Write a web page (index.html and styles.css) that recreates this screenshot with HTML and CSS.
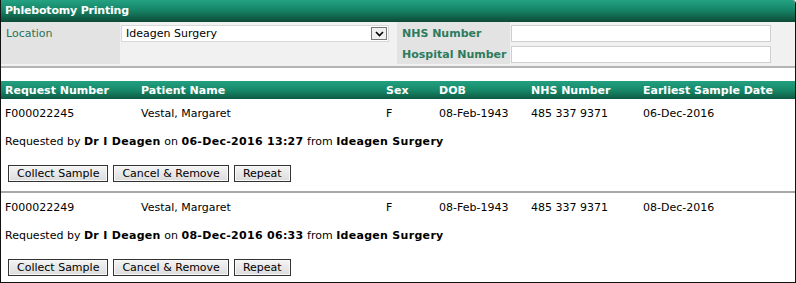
FILE: index.html
```html
<!DOCTYPE html>
<html lang="en">
<head>
  <meta charset="UTF-8">
  <title>Phlebotomy Printing</title>
  <link rel="stylesheet" href="styles.css">
</head>
<body>
  <div class="panel">
    <div class="titleBar">Phlebotomy Printing</div>

    <div class="filters">
      <div class="label locLabel">Location</div>
      <div class="field locField">
        <div class="select">
          <span>Ideagen Surgery</span>
          <span class="arrow">
            <svg width="9" height="6" viewBox="0 0 9 6"><path d="M1 1 L4.5 4.5 L8 1" fill="none" stroke="#000" stroke-width="1.6"/></svg>
          </span>
        </div>
      </div>
      <div class="label">NHS Number</div>
      <div class="field"><div class="input"></div></div>
      <div class="label">Hospital Number</div>
      <div class="field"><div class="input"></div></div>
    </div>

    <table class="results">
      <thead>
        <tr>
          <th class="cReq">Request Number</th>
          <th class="cName">Patient Name</th>
          <th class="cSex">Sex</th>
          <th class="cDob">DOB</th>
          <th class="cNhs">NHS Number</th>
          <th>Earliest Sample Date</th>
        </tr>
      </thead>
      <tbody>
        <tr class="dataRow">
          <td>F000022245</td>
          <td>Vestal, Margaret</td>
          <td>F</td>
          <td>08-Feb-1943</td>
          <td>485 337 9371</td>
          <td>06-Dec-2016</td>
        </tr>
        <tr class="infoRow">
          <td colspan="6">Requested by <b>Dr I Deagen</b> on <b>06-Dec-2016 13:27</b> from <b>Ideagen Surgery</b></td>
        </tr>
        <tr class="btnRow">
          <td colspan="6">
            <div class="buttons">
              <button>Collect Sample</button>
              <button>Cancel &amp; Remove</button>
              <button>Repeat</button>
            </div>
          </td>
        </tr>
        <tr class="dataRow">
          <td>F000022249</td>
          <td>Vestal, Margaret</td>
          <td>F</td>
          <td>08-Feb-1943</td>
          <td>485 337 9371</td>
          <td>08-Dec-2016</td>
        </tr>
        <tr class="infoRow">
          <td colspan="6">Requested by <b>Dr I Deagen</b> on <b>08-Dec-2016 06:33</b> from <b>Ideagen Surgery</b></td>
        </tr>
        <tr class="btnRow last">
          <td colspan="6">
            <div class="buttons">
              <button>Collect Sample</button>
              <button>Cancel &amp; Remove</button>
              <button>Repeat</button>
            </div>
          </td>
        </tr>
      </tbody>
    </table>
  </div>
</body>
</html>
```

FILE: styles.css
```css
html, body {
  margin: 0;
  padding: 0;
  background: #fff;
  font-family: "DejaVu Sans", Verdana, sans-serif;
  font-size: 11px;
  color: #000;
}

.panel {
  width: 794px;
  height: 282px;
  border-left: 1px solid #111;
  border-right: 1px solid #111;
  border-bottom: 1px solid #111;
  border-top-right-radius: 4px;
  overflow: hidden;
}

/* ─────────── Title bar ─────────── */
.titleBar {
  height: 22px;
  line-height: 21px;
  padding-left: 4px;
  color: #fff;
  font-weight: bold;
  font-size: 11px;
  letter-spacing: -0.2px;
  background: linear-gradient(#24a282, #168668 45%, #0d4a36);
}

/* ─────────── Filter area ─────────── */
.filters {
  display: grid;
  grid-template-columns: 119px 277px 113px 1fr;
  grid-auto-rows: 21px;
  background: #f1f1f1;
  border-bottom: 2px solid #b4b4b4;
  padding-bottom: 2px;
}
.label {
  background: #e3e3e3;
  color: #2e7b5d;
  font-weight: bold;
  padding: 5px 0 0 5px;
}
.locLabel {
  grid-row: span 2;
  font-weight: normal;
  color: #2a7355;
}
.locField {
  grid-row: span 2;
}
.field {
  padding: 3px 0 0 1px;
}
.select {
  width: 262px;
  height: 15px;
  background: #fff;
  border: 1px solid #d8d8d8;
  display: flex;
  justify-content: space-between;
  align-items: center;
  padding-left: 4px;
}
.select .arrow {
  width: 16px;
  height: 13px;
  margin-right: 1px;
  border: 1px solid #777;
  background: #f0f0f0;
  display: flex;
  align-items: center;
  justify-content: center;
  box-sizing: border-box;
}
.input {
  width: 258px;
  height: 15px;
  background: #fff;
  border: 1px solid #cfcfcf;
}

/* ─────────── Results ─────────── */
.results {
  width: 100%;
  border-collapse: collapse;
  margin-top: 13px;
}
.results th {
  height: 18px;
  padding: 0 0 0 4px;
  text-align: left;
  color: #fff;
  font-weight: bold;
  white-space: nowrap;
  background: linear-gradient(#22a080, #178a6a 50%, #0e5a42);
}
.cReq { width: 132px; }
.cName { width: 241px; }
.cSex { width: 49px; }
.cDob { width: 88px; }
.cNhs { width: 108px; }

.results td {
  padding: 0 0 0 4px;
  white-space: nowrap;
  vertical-align: middle;
}
.dataRow td {
  height: 29px;
}
.infoRow td {
  height: 26px;
}
.infoRow b {
  letter-spacing: 0.3px;
}
.btnRow td {
  height: 26px;
  padding: 11px 0 0 7px;
  border-bottom: 2px solid #a8a8a8;
  vertical-align: top;
}
.btnRow.last td {
  border-bottom: none;
}

.buttons {
  display: flex;
  gap: 5px;
}
button {
  font-family: "DejaVu Sans", Verdana, sans-serif;
  font-size: 11px;
  height: 17px;
  padding: 0 8px;
  margin: 0;
  background: linear-gradient(#f4f4f4, #dcdcdc);
  border: 1px solid #333;
  box-shadow: inset 0 0 0 1px #f8f8f8;
  color: #000;
  line-height: 14px;
}
```
